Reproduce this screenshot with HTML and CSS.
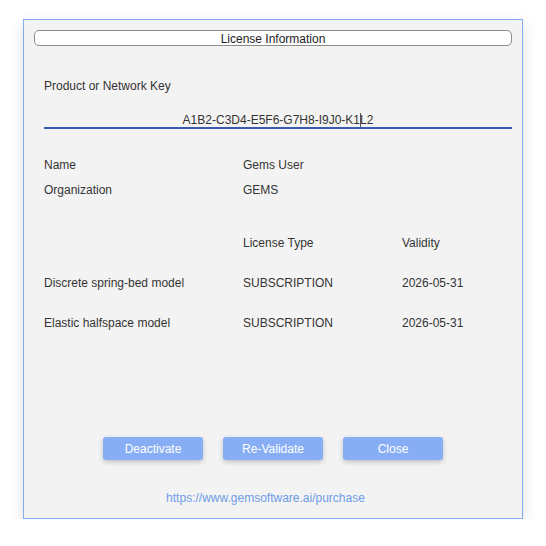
FILE: index.html
```html
<!DOCTYPE html>
<html>
<head>
<meta charset="utf-8">
<link rel="stylesheet" href="styles.css">
</head>
<body>
<div class="window">
  <div class="title">License Information</div>
  <div class="content">
    <div class="label key-label">Product or Network Key</div>
    <div class="key-field">A1B2-C3D4-E5F6-G7H8-I9J0-K1<span class="caret"></span>L2</div>
    <div class="info">
      <div class="row"><span class="c1">Name</span><span class="c2">Gems User</span></div>
      <div class="row"><span class="c1">Organization</span><span class="c2">GEMS</span></div>
    </div>
    <div class="table">
      <div class="trow head"><span class="c1"></span><span class="c2">License Type</span><span class="c3">Validity</span></div>
      <div class="trow"><span class="c1">Discrete spring-bed model</span><span class="c2">SUBSCRIPTION</span><span class="c3">2026-05-31</span></div>
      <div class="trow"><span class="c1">Elastic halfspace model</span><span class="c2">SUBSCRIPTION</span><span class="c3">2026-05-31</span></div>
    </div>
  </div>
  <div class="buttons">
    <button class="btn">Deactivate</button>
    <button class="btn">Re-Validate</button>
    <button class="btn">Close</button>
  </div>
  <div class="link-row"><a class="link" href="#">https://www.gemsoftware.ai/purchase</a></div>
</div>
</body>
</html>
```

FILE: styles.css
```css
html, body {
  margin: 0;
  padding: 0;
  background: #ffffff;
}
body {
  font-family: "Liberation Sans", Arial, sans-serif;
  font-size: 12px;
  line-height: 14px;
  color: #333333;
}
.window {
  box-sizing: border-box;
  width: 500px;
  height: 500px;
  margin: 19px 0 0 23px;
  border: 1px solid #84abf0;
  background: #f3f3f3;
  box-shadow: 0 5px 14px rgba(0, 0, 0, 0.13);
  padding: 10px 10px 0 10px;
  display: flex;
  flex-direction: column;
}
.title {
  box-sizing: border-box;
  height: 16px;
  border: 1px solid #8c8c8c;
  border-radius: 5px;
  background: #ffffff;
  text-align: center;
  padding-top: 1px;
  line-height: 14px;
  color: #222222;
}
.content {
  padding-left: 10px;
}
.key-label {
  margin-top: 33px;
}
.key-field {
  margin-top: 20px;
  text-align: center;
  border-bottom: 2px solid #3c5bb0;
  color: #333333;
  height: 14px;
}
.caret {
  display: inline-block;
  width: 0;
  height: 14px;
  border-left: 1px solid #555555;
  vertical-align: top;
  margin: 0 -0.5px;
}
.info {
  margin-top: 29px;
}
.row {
  display: flex;
  height: 14px;
}
.row + .row {
  margin-top: 11px;
}
.c1 {
  width: 199px;
  flex: none;
}
.c2 {
  width: 159px;
  flex: none;
}
.table {
  margin-top: 39px;
}
.trow {
  display: flex;
  height: 14px;
}
.trow + .trow {
  margin-top: 26px;
}
.buttons {
  margin-top: 107px;
  display: flex;
  justify-content: center;
  gap: 20px;
}
.btn {
  box-sizing: border-box;
  width: 100px;
  height: 23px;
  border: none;
  border-radius: 3px;
  background: #87aef4;
  color: #ffffff;
  font-family: "Liberation Sans", Arial, sans-serif;
  font-size: 12px;
  line-height: 14px;
  padding: 0;
  box-shadow: 0 2px 5px rgba(0, 0, 0, 0.22);
}
.link-row {
  margin-top: 31px;
  text-align: center;
  padding-right: 15px;
}
.link {
  color: #6d9ce8;
  text-decoration: none;
}
```
